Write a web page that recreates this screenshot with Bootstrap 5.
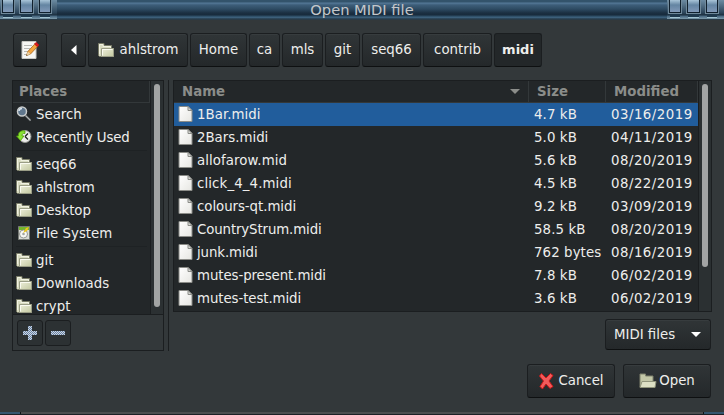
<!DOCTYPE html>
<html lang="en">
<head>
<meta charset="utf-8">
<meta name="viewport" content="width=device-width, initial-scale=1">
<title>Open MIDI file</title>
<link href="https://cdn.jsdelivr.net/npm/bootstrap@5.3.0/dist/css/bootstrap.min.css" rel="stylesheet">
<style>
html, body { height: 100%; }
body { background: #33383a; color: #eeeeec; font: 13.33px/23px "DejaVu Sans", sans-serif; overflow: hidden; width: 724px; height: 415px; white-space: nowrap; }
svg { display: block; flex: none; }
.titlebar { height: 20px; flex: none; background: linear-gradient(#33536b 0 2px, #557998 3px, #3d5d79 5px, #2e4b63 9px, #1b2f41 13px, #182b3c 15px, #2b4a62 16px, #3c5f7a 17.5px, #263a49 19px, #2c3b45 20px); }
.titlebar h1 { font-size: 14.67px; line-height: 19px; color: #c4c7ca; margin: 0; }
.winbtns { width: 57px; height: 19px; padding-left: 2px; background: linear-gradient(#6c8ba2 0, #2b4459 13px, #1b2e3e 15px, #45667f 16px, #7d9aab 19px); }
.winbtns i { width: 13px; margin-right: 6px; height: 13px; border: 1px solid #10202d; border-top: 0; background: linear-gradient(#a9c5d8, #6485a2 5px, #8199b8); box-shadow: 0 5px 0 -1px #1f394d, 0 6px 0 -1px #a2c4d2; outline: 1px solid #70899a; }
.gbtn { height: 34px; border: 1px solid #1b1e20; border-bottom-color: #0e1011; border-radius: 3px; background: linear-gradient(#303537, #24282a); color: #eeeeec; padding: 0 0 2px; font: inherit; box-shadow: inset 0 1px #373c3e; display: flex; align-items: center; justify-content: center; flex: none; }
.gbtn:hover { color: #eeeeec; }
.gbtn.current { background: #232729; box-shadow: none; font-weight: bold; font-size: 13px; }
.pathbar { padding: 13px 0 0 13px; gap: 2px; height: 60px; flex: none; }
.w-edit { width: 34px; margin-right: 12px; padding: 0; } .w-back { width: 25px; padding: 0; } .w-user { width: 100px; gap: 6px; } .w-home { width: 57px; } .w-ca { width: 31px; } .w-mls { width: 41px; } .w-git { width: 35px; } .w-seq { width: 59px; } .w-con { width: 69px; } .w-midi { width: 48px; }
.w-user svg { margin-top: 2px; }
.main-row { padding-left: 12px; height: 271px; flex: none; }
.places { width: 152px; height: 271px; border: 1px solid #1b1e20; }
.places-view { height: 234px; overflow: hidden; background: #232729; border-bottom: 1px solid #1b1e20; }
.place-tools { padding: 5px 4px; gap: 2px; }
.file-view { width: 539px; height: 232px; border: 1px solid #1b1e20; background: #232729; overflow: hidden; }
.head { height: 22px; color: #8b8d8a; font-weight: bold; line-height: 21px; border-bottom: 1px solid #33383a; flex: none; }
.head > div { border-right: 1px solid #33383a; }
.head .places-title { padding-left: 6px; }
.item { height: 23px; padding-left: 3px; gap: 4px; flex: none; display: flex; align-items: center; }
.item svg, .file svg { margin-bottom: 2px; }
.divide { height: 4px; border-top: 1px solid #1e2224; margin: 0 3px; flex: none; transform: translateY(1px); }
.track { width: 13px; border-left: 1px solid #1b1e20; background: #2b3032; padding: 3px 0 0 3px; flex: none; }
.thumb { width: 6px; background: #a2a4a4; border-radius: 3px; }
.tool { width: 26px; height: 26px; border: 1px solid #1b1e20; border-radius: 3px; background: #2c3133; display: flex; align-items: center; justify-content: center; }
.paned { width: 1px; background: #1b1e20; margin: 0 4px; }
.c-name { width: 355px; } .c-size { width: 77px; } .c-mod { width: 92px; }
.file { height: 23px; flex: none; }
.file.selected { background: #215d9c; }
.file .c-name { padding-left: 4px; gap: 4px; }
.file .c-size { padding-left: 5px; letter-spacing: .1px; }
.file .c-mod { padding-left: 5px; letter-spacing: .48px; }
.right-col { width: 539px; }
.combo { width: 106px; height: 31px; margin: 7px 1px 0 auto; padding: 0 9px 1px 8px; justify-content: space-between; }
.actions { gap: 8px; padding: 13px 13px 0 0; flex: none; height: 61px; }
.actions .gbtn { width: 88px; gap: 2px; }
.actions svg { margin-top: 2px; }
.frame-bottom { height: 3px; background: linear-gradient(90deg, #34556e 20px, #101416 20px 21px, #4b4d4f 21px 703px, #101416 703px 704px, #34556e 704px); border-bottom: 1px solid #1b2025; flex: none; }
</style>
</head>
<body class="d-flex flex-column">
<svg width="0" height="0" class="position-absolute" aria-hidden="true">
  <defs>
    <linearGradient id="paper" x2="1" y2="1"><stop stop-color="#fff"/><stop offset="1" stop-color="#e6e6e2"/></linearGradient>
    <linearGradient id="fold" x2="1" y2="1"><stop stop-color="#eef0dc"/><stop offset="1" stop-color="#c3c8a0"/></linearGradient>
    <pattern id="dots" width="2" height="2" patternUnits="userSpaceOnUse"><path d="M0 0h2v2H0z" fill="#6381a8"/><path d="M0 0h1v1H0zM1 1h1v1H1z" fill="#d0d6de"/></pattern>
  </defs>
  <symbol id="folder" viewBox="0 0 16 16"><path d="M.5 13.500V1.500h5.500v2h7.500v3h2v8H1.500z" fill="#d8dbc0" stroke="#787b66"/><path d="M1.500 12V2.500h3.500v2h7.500V6" fill="none" stroke="#f0f1e2"/><path d="M3.500 6.500h12v8h-12z" fill="url(#fold)" stroke="#9a9d86"/><path d="M4.500 13.500v-6h10" fill="none" stroke="#fafbf0"/></symbol>
  <symbol id="page" viewBox="0 0 14 16"><path d="M.5.5h9l4 4v11H.5z" fill="url(#paper)" stroke="#8b8c88"/><path d="M9.500.5v4h4z" fill="#d7d8d4" stroke="#8b8c88"/></symbol>
</svg>

<header class="titlebar d-flex justify-content-between">
  <div class="winbtns d-flex"><i></i><i></i><i></i></div>
  <h1>Open MIDI file</h1>
  <div class="winbtns d-flex"><i></i><i></i><i></i></div>
</header>

<nav class="pathbar d-flex">
  <button class="btn gbtn w-edit" aria-label="Type a file name"><svg width="20" height="20" viewBox="0 0 20 20"><path d="M2 1.500h14v17H2z" fill="#f6f6f4" stroke="#c6c6c2"/><path d="M4 5.500h8M4 8.500h6M4 11.500h4M4 14.500h3" stroke="#b7b8b5"/><path d="M6.500 15.500l1.300-4 7-7.500 2.700 2.600-7 7.400z" fill="#f4a63f" stroke="#a5631c" stroke-width=".8"/><path d="M6.500 15.500l1.300-4 2.700 2.500z" fill="#e9d1a7"/><path d="M6.300 15.800l1.200-.5-.7-.9z" fill="#222"/><path d="M14.600 4l1.500-1.500 2.700 2.600-1.500 1.400z" fill="#e01b1b" stroke="#c40f16"/></svg></button>
  <button class="btn gbtn w-back" aria-label="Back"><svg width="6" height="10" viewBox="0 0 6 10"><path d="M5.500 0v10L0 5z" fill="#fff"/></svg></button>
  <button class="btn gbtn w-user"><svg width="16" height="16"><use href="#folder"/></svg><span>ahlstrom</span></button>
  <button class="btn gbtn w-home">Home</button>
  <button class="btn gbtn w-ca">ca</button>
  <button class="btn gbtn w-mls">mls</button>
  <button class="btn gbtn w-git">git</button>
  <button class="btn gbtn w-seq">seq66</button>
  <button class="btn gbtn w-con">contrib</button>
  <button class="btn gbtn current w-midi">midi</button>
</nav>

<main class="main-row d-flex">
  <aside class="places">
    <div class="places-view d-flex">
      <div class="flex-grow-1 d-flex flex-column">
        <div class="head"><div class="places-title h-100">Places</div></div>
        <div class="item"><svg width="16" height="16" viewBox="0 0 16 16"><path d="M9.500 9.500l5 5" stroke="#777b7c" stroke-width="2"/><path d="M9.500 9.500l5 5" stroke="#c8cbcb" stroke-width=".7"/><circle cx="6" cy="5.500" r="4.500" fill="#61788e" stroke="#c9cccc" stroke-width="1.500"/><path d="M3 5a3 3 0 013-2.500" stroke="#d7e4ee" stroke-width="1.500" fill="none"/></svg>Search</div>
        <div class="item"><svg width="16" height="16" viewBox="0 0 16 16"><circle cx="9" cy="7.500" r="6" fill="#eeeeec" stroke="#92958f"/><path d="M9 7.500l3-3M9 7.500l3 3" stroke="#222" stroke-width="1.300"/><path d="M9 2C4 1 2 4 2.500 7H.5l4 4.500L8 7H6c0-2 1-3 3-2.500z" fill="#8ae234" stroke="#4e9a06" stroke-width=".8"/></svg><span style="letter-spacing:-.12px">Recently Used</span></div>
        <div class="divide"></div>
        <div class="item"><svg width="16" height="16"><use href="#folder"/></svg>seq66</div>
        <div class="item"><svg width="16" height="16"><use href="#folder"/></svg>ahlstrom</div>
        <div class="item"><svg width="16" height="16"><use href="#folder"/></svg>Desktop</div>
        <div class="item"><svg width="16" height="16" viewBox="0 0 16 16"><path d="M2.500 1.500h11v13h-11z" fill="#d8dad6" stroke="#777a75"/><path d="M3 2h10v3H3z" fill="#73b52c"/><circle cx="7.500" cy="9" r="4" fill="#f7f7f5" stroke="#969993"/><circle cx="7.500" cy="9" r="1.300" fill="#a4a7a1"/><path d="M7 8l3-5 3-1-2 4z" fill="#edc51b"/></svg>File System</div>
        <div class="divide"></div>
        <div class="item"><svg width="16" height="16"><use href="#folder"/></svg>git</div>
        <div class="item"><svg width="16" height="16"><use href="#folder"/></svg>Downloads</div>
        <div class="item"><svg width="16" height="16"><use href="#folder"/></svg>crypt</div>
      </div>
      <div class="track"><div class="thumb" style="height:223px"></div></div>
    </div>
    <div class="d-flex place-tools">
      <button class="tool p-0" aria-label="Add"><svg width="14" height="14" viewBox="0 0 14 14"><path d="M5 0h4v5h5v4H9v5H5V9H0V5h5z" fill="url(#dots)"/></svg></button>
      <button class="tool p-0" aria-label="Remove"><svg width="14" height="4" viewBox="0 0 14 4"><path d="M0 0h14v4H0z" fill="url(#dots)"/></svg></button>
    </div>
  </aside>
  <div class="paned"></div>
  <section class="right-col">
    <div class="file-view d-flex">
      <div id="files">
        <div class="head d-flex"><div class="c-name ps-2 pe-2 d-flex justify-content-between align-items-center"><span>Name</span><svg width="10" height="5" viewBox="0 0 10 5"><path d="M0 0h10L5 5z" fill="#8b8d8a"/></svg></div><div class="c-size ps-2">Size</div><div class="c-mod ps-2">Modified</div></div>
      </div>
      <div class="track"><div class="thumb" style="height:183px"></div></div>
    </div>
    <button class="btn gbtn combo">MIDI files<svg width="10" height="5" viewBox="0 0 10 5"><path d="M0 0h10L5 5z" fill="#fff"/></svg></button>
  </section>
</main>

<footer class="actions d-flex justify-content-end">
  <button class="btn gbtn"><svg width="18" height="18" viewBox="0 0 18 18"><path d="M3.500 1.500L8 6l4.500-4.500 2.500 2L11 9l4 5.500-3 2-4-4.500-3.500 5L2 14.500 5.500 9 1.500 4z" fill="#f15b5b" stroke="#cc1717" stroke-linejoin="round"/></svg>Cancel</button>
  <button class="btn gbtn"><svg width="18" height="16" viewBox="0 0 18 16"><path d="M1 14V1h5.500v2H14v5" fill="#c3c7a7" stroke="#7e816d"/><path d="M1 14.500L3 8.500h14l-1 6z" fill="#dde0c4" stroke="#90947b"/></svg>Open</button>
</footer>
<div class="frame-bottom"></div>

<script src="https://cdn.jsdelivr.net/npm/bootstrap@5.3.0/dist/js/bootstrap.bundle.min.js"></script>
<script>
[["1Bar.midi","4.7 kB","03/16/2019",.05],["2Bars.midi","5.0 kB","04/11/2019",0],["allofarow.mid","5.6 kB","08/20/2019",.08],["click_4_4.midi","4.5 kB","08/22/2019",.12],["colours-qt.midi","9.2 kB","03/09/2019",-.05],["CountryStrum.midi","58.5 kB","08/20/2019",-.12],["junk.midi","762 bytes","08/16/2019",-.1],["mutes-present.midi","7.8 kB","06/02/2019",-.08],["mutes-test.midi","3.6 kB","06/02/2019",-.08]].forEach(([n, s, m, track], i) => {
  document.getElementById("files").insertAdjacentHTML("beforeend",
    `<div class="file d-flex ${i ? "" : "selected"}"><div class="c-name d-flex align-items-center"><svg width="15" height="16"><use href="#page"/></svg><span style="letter-spacing:${track}px">${n}</span></div><div class="c-size">${s}</div><div class="c-mod">${m}</div></div>`);
});
</script>
</body>
</html>
